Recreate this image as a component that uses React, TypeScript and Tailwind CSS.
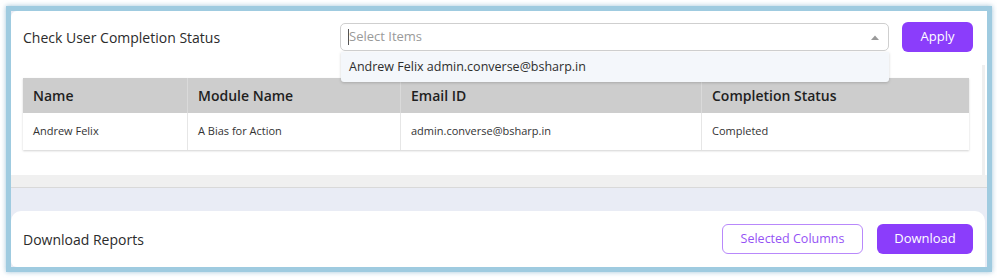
import React from 'react';

const columns = [
  { label: 'Name', width: 'w-[164px]' },
  { label: 'Module Name', width: 'w-[213px]' },
  { label: 'Email ID', width: 'w-[301px]' },
  { label: 'Completion Status', width: 'flex-1' },
];

const row = ['Andrew Felix', 'A Bias for Action', 'admin.converse@bsharp.in', 'Completed'];

const App: React.FC = () => {
  return (
    <div className="w-[997px] h-[278px] bg-white pt-[6px] pl-[6px] font-['Open_Sans',sans-serif] text-[#333]">
      <div className="w-[986px] h-[266px] border-[5px] border-[#9fcbe0] bg-[#e9ecf5] shadow-[0_0_5px_rgba(120,170,200,0.7)] flex flex-col overflow-hidden">
        {/* top card */}
        <div className="relative bg-white rounded-tl-[6px] h-[177px] flex flex-col border-b border-[#d9d9d9]">
          <div className="flex flex-1">
            <div className="flex-1 flex flex-col pl-[12px] pt-[11px]">
              <div className="flex items-center h-[30px]">
                <h2 className="w-[317px] text-[14px] text-[#2b2b2b]">Check User Completion Status</h2>
                <div className="relative w-[549px] h-[28px]">
                  <div className="h-full border border-[#cfcfcf] rounded-[5px] flex items-center pl-[7px] pr-[9px]">
                    <span className="w-px h-[16px] bg-[#555]"></span>
                    <span className="text-[13px] text-[#9a9a9a] flex-1">Select Items</span>
                    <svg width="8" height="5" viewBox="0 0 8 5">
                      <path d="M0 5 L4 0.5 L8 5 Z" fill="#9a9a9a" />
                    </svg>
                  </div>
                  <div className="absolute left-px right-0 top-[29px] h-[30px] bg-[#f4f7fb] rounded-b-[3px] shadow-[0_1px_3px_rgba(0,0,0,0.18)] flex items-center pl-[8px] text-[12.5px] text-[#2e2e2e] z-10">
                    Andrew Felix admin.converse@bsharp.in
                  </div>
                </div>
                <button className="ml-[13px] w-[71px] h-[30px] rounded-[6px] bg-[#8b3dfb] text-white text-[13px]">Apply</button>
              </div>
              <div className="mt-[26px] w-[946px] shadow-[0_1px_2px_rgba(0,0,0,0.18)]">
                <div className="flex h-[35px] bg-[#cdcdcd]">
                  {columns.map((c, i) => (
                    <div
                      key={c.label}
                      className={`${c.width} flex items-center pl-[10px] text-[14px] font-semibold text-[#1f1f1f] ${i > 0 ? 'border-l border-[#dadada]' : ''}`}
                    >
                      {c.label}
                    </div>
                  ))}
                </div>
                <div className="flex h-[37px] bg-white">
                  {row.map((v, i) => (
                    <div
                      key={i}
                      className={`${columns[i].width} flex items-center pl-[10px] text-[11px] text-[#333] ${i > 0 ? 'border-l border-[#e6e6e6]' : ''}`}
                    >
                      {v}
                    </div>
                  ))}
                </div>
              </div>
            </div>
            <div className="w-[3px] mt-[54px] bg-[#efefef] mr-[2px]"></div>
          </div>
          <div className="h-[12px] bg-[#f0f0f0]"></div>
        </div>
        {/* bottom card */}
        <div className="mt-[23px] mr-[2px] h-[56px] bg-white rounded-t-[10px] rounded-bl-[6px] flex items-center pl-[12px] pr-[12px]">
          <h2 className="flex-1 text-[14px] text-[#2b2b2b]">Download Reports</h2>
          <button className="w-[141px] h-[30px] rounded-[6px] border border-[#b888fb] text-[#9552f5] text-[12.5px] bg-white">Selected Columns</button>
          <button className="ml-[14px] w-[96px] h-[30px] rounded-[6px] bg-[#8b3dfb] text-white text-[13px]">Download</button>
        </div>
      </div>
    </div>
  );
};

export default App;
